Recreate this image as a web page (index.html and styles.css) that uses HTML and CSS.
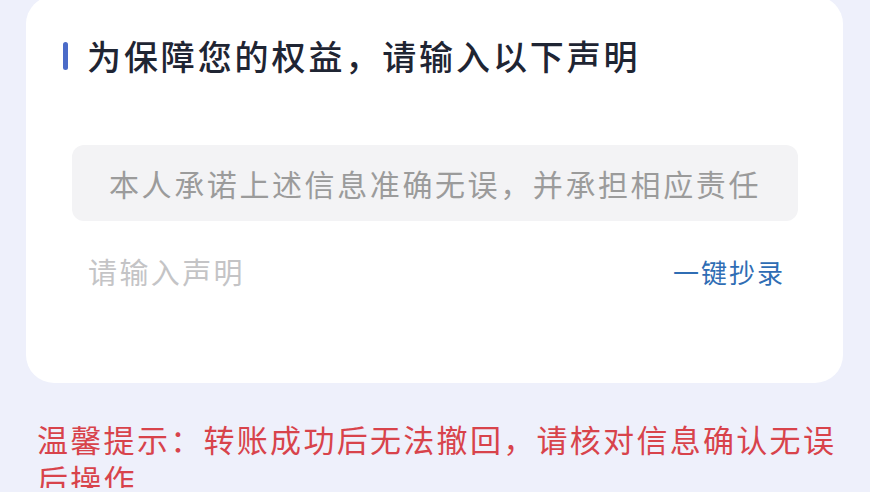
FILE: index.html
```html
<!DOCTYPE html>
<html lang="zh-CN">
<head>
<meta charset="utf-8">
<link rel="stylesheet" href="styles.css">
</head>
<body>
<div class="page">
  <section class="card">
    <h2 class="title"><span class="bar"></span><span class="title-text">为保障您的权益，请输入以下声明</span></h2>
    <div class="statement">本人承诺上述信息准确无误，并承担相应责任</div>
    <div class="input-row">
      <span class="placeholder">请输入声明</span>
      <span class="copy">一键抄录</span>
    </div>
  </section>
  <p class="tip">温馨提示：转账成功后无法撤回，请核对信息确认无误后操作</p>
</div>
</body>
</html>
```
FILE: styles.css
```css
html, body {
  margin: 0;
  padding: 0;
  background: #eef0fb;
  font-family: "Noto Sans CJK SC", "Noto Sans", sans-serif;
  overflow: hidden;
}
.page {
  width: 870px;
  height: 492px;
  box-sizing: border-box;
  padding: 0 27px 0 26px;
}
.card {
  margin-top: -4px;
  height: 387px;
  box-sizing: border-box;
  background: #ffffff;
  border-radius: 28px;
  padding: 41px 45px 0 46px;
}
.title {
  margin: 0 0 0 -9px;
  display: flex;
  align-items: center;
  font-size: 34px;
  font-weight: 500;
  color: #1f2533;
  line-height: 38px;
}
.bar {
  width: 5px;
  height: 28px;
  border-radius: 3px;
  background: #4b6bc8;
  margin-right: 19px;
}
.title-text {
  letter-spacing: 2.9px;
}
.statement {
  margin-top: 70px;
  height: 76px;
  border-radius: 12px;
  background: #f3f3f5;
  display: flex;
  align-items: center;
  justify-content: center;
  font-size: 30px;
  letter-spacing: 2.6px;
  color: #9b9b9b;
}
.input-row {
  margin-top: 29px;
  display: flex;
  justify-content: space-between;
  align-items: center;
  padding: 0 13px 0 16px;
}
.placeholder {
  font-size: 29px;
  letter-spacing: 2.4px;
  color: #c4c4c6;
}
.copy {
  font-size: 26px;
  letter-spacing: 2px;
  color: #2f6db4;
}
.tip {
  margin: 36px 0 0 11px;
  font-size: 31px;
  line-height: 40px;
  letter-spacing: 2.3px;
  color: #d8434b;
}
```
